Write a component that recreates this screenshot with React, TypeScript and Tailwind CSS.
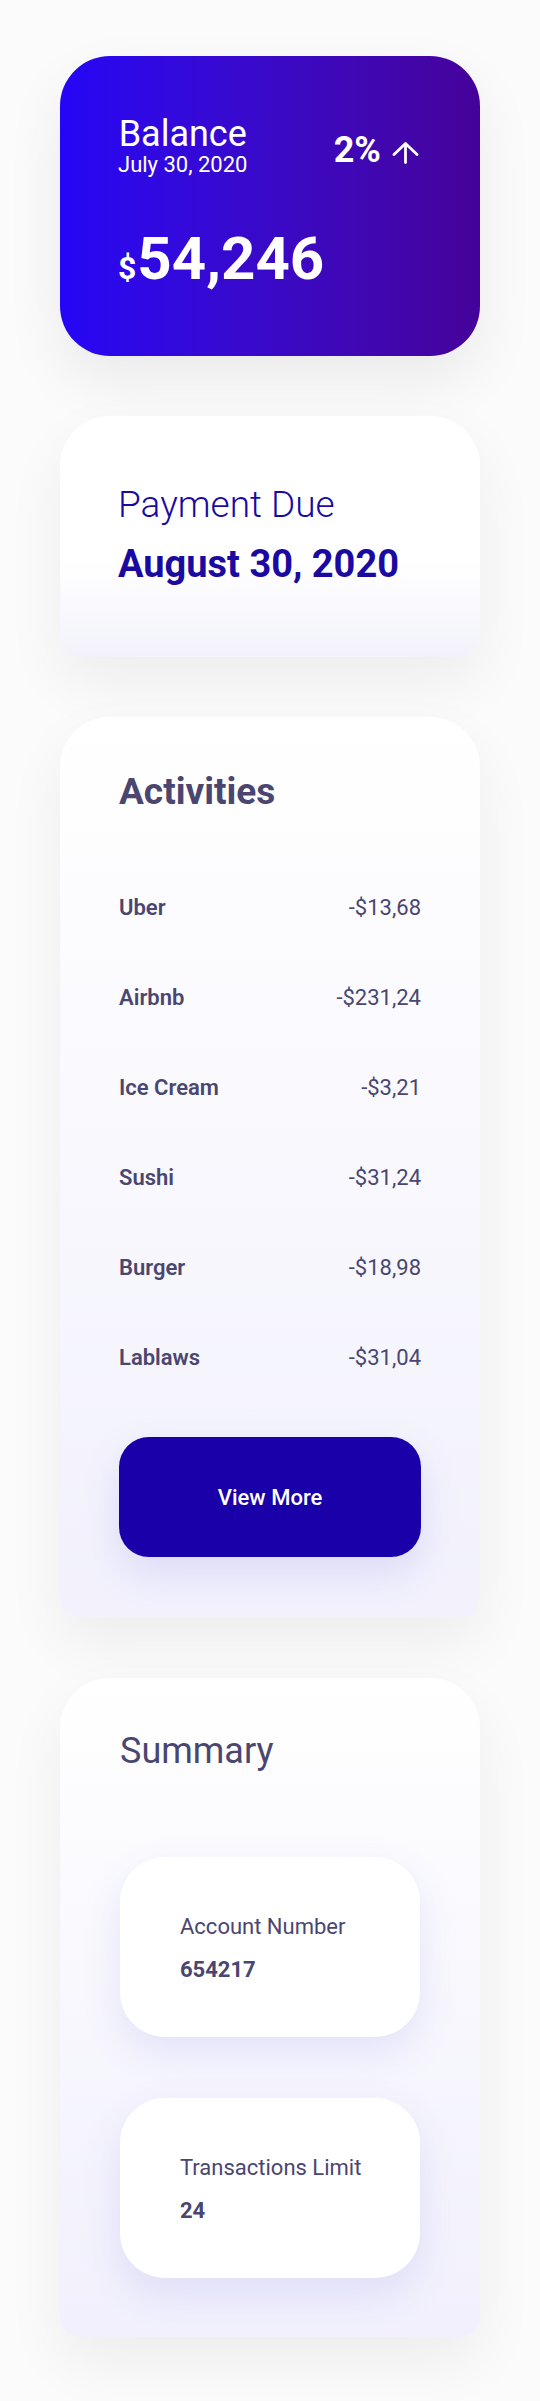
const activities = [
  { name: 'Uber', amount: '-$13,68' },
  { name: 'Airbnb', amount: '-$231,24' },
  { name: 'Ice Cream', amount: '-$3,21' },
  { name: 'Sushi', amount: '-$31,24' },
  { name: 'Burger', amount: '-$18,98' },
  { name: 'Lablaws', amount: '-$31,04' },
]

const summary = [
  { label: 'Account Number', value: '654217' },
  { label: 'Transactions Limit', value: '24' },
]

function UpArrow() {
  return (
    <svg width="27" height="22" viewBox="0 0 27 22" fill="none" stroke="currentColor" strokeWidth="2.8" strokeLinecap="round" strokeLinejoin="round">
      <path d="M13.5 20.5V2" />
      <path d="M2 12.5L13.5 1.6L25 12.5" />
    </svg>
  )
}

function BalanceCard() {
  return (
    <div className="rounded-[50px] bg-gradient-to-r from-[#2505f6] to-[#45029a] pl-[58px] pr-[61px] pt-[58px] pb-[67px] text-white shadow-[0_25px_60px_rgba(0,0,0,0.07)]">
      <div className="flex items-start justify-between">
        <div className="flex flex-col items-center">
          <span className="text-[36px] leading-[40px]">Balance</span>
          <span className="text-[22px] leading-[22px]">July 30, 2020</span>
        </div>
        <div className="flex items-center gap-[11px] pt-[16px]">
          <span className="text-[36px] leading-[40px] font-bold">2%</span>
          <span className="mt-[6px]">
            <UpArrow />
          </span>
        </div>
      </div>
      <div className="mt-[53px] flex items-baseline">
        <span className="text-[32px] font-bold leading-none">$</span>
        <span className="ml-[1px] text-[60px] font-bold leading-[60px]">54,246</span>
      </div>
    </div>
  )
}

function PaymentCard() {
  return (
    <div className="rounded-t-[50px] rounded-b-[20px] bg-gradient-to-b from-white from-60% to-[#f3f2fc] px-[58px] pt-[68px] pb-[72px] text-[#1a0aa2] shadow-[0_25px_60px_rgba(0,0,0,0.06)]">
      <div className="text-[37px] font-light leading-[42px]">Payment Due</div>
      <div className="mt-[17px] text-[38px] font-bold leading-[42px]">August 30, 2020</div>
    </div>
  )
}

function ActivitiesCard() {
  return (
    <div className="rounded-t-[50px] rounded-b-[20px] bg-gradient-to-b from-white to-[#f2f1fc] px-[59px] pt-[54px] pb-[61px] text-[#4a4670] shadow-[0_25px_60px_rgba(0,0,0,0.06)]">
      <h2 className="text-[37px] font-bold leading-[42px]">Activities</h2>
      <ul className="mt-[49px]">
        {activities.map((a) => (
          <li key={a.name} className="flex h-[90px] items-center justify-between text-[22px]">
            <span className="font-semibold">{a.name}</span>
            <span className="font-normal">{a.amount}</span>
          </li>
        ))}
      </ul>
      <button className="mt-[35px] flex h-[120px] w-full items-center justify-center rounded-[30px] bg-[#1a00a9] text-[22px] font-medium text-white shadow-[0_15px_40px_rgba(80,70,210,0.14)]">
        View More
      </button>
    </div>
  )
}

function SummaryCard() {
  return (
    <div className="rounded-t-[50px] rounded-b-[20px] bg-gradient-to-b from-white to-[#f1f0fc] px-[60px] pt-[52px] pb-[59px] text-[#4a4670] shadow-[0_25px_60px_rgba(0,0,0,0.06)]">
      <h2 className="text-[36px] font-normal leading-[42px]">Summary</h2>
      <div className="mt-[85px] flex flex-col gap-[61px]">
        {summary.map((s) => (
          <div
            key={s.label}
            className="h-[180px] rounded-[45px] bg-white pl-[60px] pr-[16px] pt-[57px] shadow-[0_15px_40px_rgba(80,70,210,0.12)]"
          >
            <div className="whitespace-nowrap text-[22px] leading-[26px]">{s.label}</div>
            <div className="mt-[17px] text-[22px] font-bold leading-[26px]">{s.value}</div>
          </div>
        ))}
      </div>
    </div>
  )
}

export default function App() {
  return (
    <div className="min-h-screen bg-[#fbfbfb] pt-[56px] pb-[66px] font-['Roboto',sans-serif]">
      <div className="mx-auto flex w-[420px] flex-col gap-[60px]">
        <BalanceCard />
        <PaymentCard />
        <ActivitiesCard />
        <SummaryCard />
      </div>
    </div>
  )
}
